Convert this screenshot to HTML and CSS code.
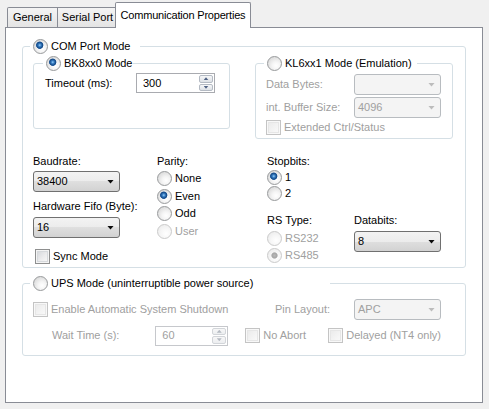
FILE: index.html
```html
<!DOCTYPE html>
<html>
<head>
<meta charset="utf-8">
<title>Communication Properties</title>
<link rel="stylesheet" href="styles.css">
</head>
<body>
<div class="window">
  <div class="tabs">
    <div class="tab tab-general">General</div>
    <div class="tab tab-serial">Serial Port</div>
    <div class="tab tab-active">Communication Properties</div>
  </div>
  <div class="panel">
    <fieldset class="group group-com">
      <legend class="legend legend-com"><span class="rb on">COM Port Mode</span></legend>
      <div class="mode-row">
        <fieldset class="group group-bk">
          <legend class="legend legend-bk"><span class="rb on">BK8xx0 Mode</span></legend>
          <div class="field-row">
            <span class="lbl lbl-timeout">Timeout (ms):</span>
            <div class="spin spin-timeout">
              <span class="spin-val">300</span>
              <span class="spin-btns"><span class="spin-btn up"></span><span class="spin-btn down"></span></span>
            </div>
          </div>
        </fieldset>
        <fieldset class="group group-kl">
          <legend class="legend legend-kl"><span class="rb">KL6xx1 Mode (Emulation)</span></legend>
          <div class="field-row">
            <span class="lbl lbl-kl dis">Data Bytes:</span>
            <div class="sel dis"><span class="sel-val"></span><span class="arrow"></span></div>
          </div>
          <div class="field-row row-gap2">
            <span class="lbl lbl-kl dis">int. Buffer Size:</span>
            <div class="sel dis"><span class="sel-val">4096</span><span class="arrow"></span></div>
          </div>
          <span class="cb dis kl-ext">Extended Ctrl/Status</span>
        </fieldset>
      </div>
      <div class="settings">
        <div class="col col-baud">
          <span class="lbl">Baudrate:</span>
          <div class="sel sel-baud"><span class="sel-val">38400</span><span class="arrow"></span></div>
          <span class="lbl lbl-fifo">Hardware Fifo (Byte):</span>
          <div class="sel sel-fifo"><span class="sel-val">16</span><span class="arrow"></span></div>
          <span class="cb sync">Sync Mode</span>
        </div>
        <div class="col col-parity">
          <span class="lbl">Parity:</span>
          <div class="radio-list parity-list">
            <span class="rb">None</span>
            <span class="rb on">Even</span>
            <span class="rb">Odd</span>
            <span class="rb dis">User</span>
          </div>
        </div>
        <div class="col col-stop">
          <span class="lbl">Stopbits:</span>
          <div class="radio-list stop-list">
            <span class="rb on">1</span>
            <span class="rb">2</span>
          </div>
          <span class="lbl lbl-rstype">RS Type:</span>
          <div class="radio-list rs-list">
            <span class="rb dis">RS232</span>
            <span class="rb dis on">RS485</span>
          </div>
        </div>
        <div class="col col-data">
          <span class="lbl">Databits:</span>
          <div class="sel sel-data"><span class="sel-val">8</span><span class="arrow"></span></div>
        </div>
      </div>
    </fieldset>
    <fieldset class="group group-ups">
      <legend class="legend legend-ups"><span class="rb">UPS Mode (uninterruptible power source)</span></legend>
      <div class="ups-row">
        <span class="cb dis ups-enable">Enable Automatic System Shutdown</span>
        <span class="lbl dis">Pin Layout:</span>
        <div class="sel dis sel-pin"><span class="sel-val">APC</span><span class="arrow"></span></div>
      </div>
      <div class="ups-row ups-row2">
        <span class="lbl dis lbl-wait">Wait Time (s):</span>
        <div class="spin dis spin-wait">
          <span class="spin-val">60</span>
          <span class="spin-btns"><span class="spin-btn up"></span><span class="spin-btn down"></span></span>
        </div>
        <span class="cb dis no-abort">No Abort</span>
        <span class="cb dis">Delayed (NT4 only)</span>
      </div>
    </fieldset>
  </div>
</div>
</body>
</html>
```

FILE: styles.css
```css
* { box-sizing: border-box; }
html, body { margin: 0; padding: 0; }
body {
  width: 489px;
  height: 409px;
  overflow: hidden;
  background: #f0f0f0;
  color: #000;
  font-family: "Liberation Sans", Arial, sans-serif;
  font-size: 11px;
  line-height: 13px;
}
.window { padding: 0 6px 0 5px; }

/* tabs */
.tabs {
  display: flex;
  align-items: flex-end;
  height: 27px;
  padding-left: 2px;
}
.tab {
  height: 20px;
  border: 1px solid #898c95;
  border-bottom: 0;
  background: linear-gradient(#f4f4f4, #e4e4e4);
  display: flex;
  align-items: center;
  justify-content: center;
  white-space: nowrap;
}
.tab-general { width: 51px; border-radius: 2px 0 0 0; }
.tab-serial { width: 61px; margin-left: -1px; border-radius: 0 2px 0 0; }
.tab-active {
  width: 136px;
  height: 26px;
  margin-left: -3px;
  margin-bottom: -1px;
  background: #fff;
  position: relative;
  z-index: 1;
  border-radius: 2px 2px 0 0;
  padding-bottom: 1px;
  letter-spacing: -0.2px;
}

/* panel */
.panel {
  width: 478px;
  height: 376px;
  border: 1px solid #898c95;
  background: #fff;
}

/* group boxes */
.group {
  margin: 0;
  min-width: 0;
  border: 1px solid #d5dfe5;
  border-radius: 3px;
}
.legend {
  display: block;
  height: 13px;
  line-height: 13px;
  margin-left: -3px;
  padding: 0 0 0 3px;
}
.legend-com { padding-right: 10px; }
.legend-bk { margin-left: -2px; padding-right: 1px; }
.legend-kl { margin-left: -2px; padding-right: 5px; }
.legend-ups { width: 300px; }

.group-com {
  margin: 12px 16px 0 16px;
  padding: 4px 12px 4px 10px;
}
.mode-row {
  display: flex;
  align-items: flex-start;
  height: 82px;
}
.group-bk {
  width: 197px;
  height: 72px;
  padding: 3px 0 0 11px;
}
.group-kl {
  width: 198px;
  height: 82px;
  margin-left: 25px;
  padding: 4px 0 0 10px;
}
.field-row {
  display: flex;
  align-items: center;
}
.row-gap2 { margin-top: 2px; }
.lbl { display: block; height: 13px; line-height: 13px; white-space: nowrap; }
.lbl-timeout { width: 91px; }
.lbl-kl { width: 88px; }
.kl-ext { margin-top: 3px; }

.dis { color: #a0a0a0; }

/* settings */
.settings {
  display: flex;
  margin-top: 16px;
  height: 108px;
}
.col { display: flex; flex-direction: column; align-items: flex-start; }
.col-baud { width: 124px; }
.col-parity { width: 110px; }
.col-stop { width: 87px; }
.sel-baud { margin-top: 3px; }
.lbl-fifo { margin-top: 8px; }
.sel-fifo { margin-top: 4px; }
.sync { margin-top: 12px; margin-left: 2px; }

.radio-list { display: flex; flex-direction: column; align-items: flex-start; }
.parity-list { margin-top: 4px; gap: 4.5px; }
.stop-list { margin-top: 3px; gap: 3px; }
.lbl-rstype { margin-top: 14px; }
.rs-list { margin-top: 4.5px; gap: 4px; }
.col-data { padding-top: 59px; }
.sel-data { margin-top: 4px; }

/* UPS group */
.group-ups {
  margin: 9px 16px 0 16px;
  padding: 9px 24px 9px 10px;
}
.ups-row {
  display: flex;
  align-items: center;
  height: 21px;
}
.ups-enable { flex: 1; }
.sel-pin { margin-left: 24px; }
.ups-row2 { margin-top: 5px; }
.lbl-wait { width: 112px; margin-left: 19px; }
.spin-wait { width: 58px; height: 21px; }
.no-abort { width: 90px; margin-left: 17px; }

/* radio buttons */
.rb, .cb {
  display: inline-flex;
  align-items: center;
  gap: 3px;
  height: 13px;
  line-height: 13px;
  white-space: nowrap;
  vertical-align: top;
}
.rb::before {
  content: "";
  flex: none;
  width: 13px;
  height: 13px;
  border-radius: 50%;
  border: 1px solid #989a9c;
  background: radial-gradient(circle at 62% 66%, #ffffff 0, #f5f5f5 32%, #dddddd 74%, #c9c9c9 100%);
}
.rb.on::before {
  background:
    radial-gradient(circle at 44% 40%, #9ad0f7 0, #3a80c6 1.4px, #154a86 3px, #2c62a0 3.4px, rgba(255,255,255,0) 4px),
    radial-gradient(circle at 62% 66%, #ffffff 0, #f5f5f5 32%, #dddddd 74%, #c9c9c9 100%);
}
.rb.dis::before {
  border-color: #cacaca;
  background: radial-gradient(circle at 62% 66%, #ffffff 0, #f7f7f7 40%, #e8e8e8 100%);
}
.rb.dis.on::before {
  background:
    radial-gradient(circle at 50% 50%, #b8b8b8 0, #a6a6a6 2.6px, rgba(255,255,255,0) 3.6px),
    radial-gradient(circle at 62% 66%, #ffffff 0, #f7f7f7 40%, #e8e8e8 100%);
}

/* check boxes */
.cb::before {
  content: "";
  flex: none;
  width: 13px;
  height: 13px;
  border: 1px solid #8e8f8f;
  background: linear-gradient(135deg, #d0d3d7 0%, #ececed 55%, #fafafa 100%);
  box-shadow: inset 0 0 0 1px #f4f4f4, inset 0 0 0 2px #d6d9dc;
}
.cb.dis::before {
  border-color: #c4c4c4;
  background: linear-gradient(135deg, #e8e8e8 0%, #f4f4f4 60%, #fbfbfb 100%);
  box-shadow: inset 0 0 0 1px #f8f8f8, inset 0 0 0 2px #e6e6e6;
}

/* combo boxes */
.sel {
  display: flex;
  align-items: center;
  width: 87px;
  height: 21px;
  padding-left: 3px;
  border: 1px solid #707070;
  border-radius: 3px;
  background: linear-gradient(#f3f3f3 0%, #ececec 50%, #dfdfdf 50%, #d2d2d2 100%);
  color: #000;
}
.sel-val { flex: 1; white-space: nowrap; }
.arrow {
  flex: none;
  width: 7px;
  height: 4px;
  margin-right: 5px;
  background: #0d0d0d;
  clip-path: polygon(0 0, 100% 0, 50% 100%);
}
.sel.dis {
  border-color: #b8bcc0;
  background: #f4f4f4;
  color: #a0a0a0;
}
.sel.dis .arrow { background: #bcbcbc; }

/* spinners */
.spin {
  display: flex;
  align-items: stretch;
  width: 79px;
  height: 20px;
  border: 1px solid #a9abb0;
  background: #fff;
}
.spin-val {
  flex: 1;
  display: flex;
  align-items: center;
  padding-left: 6px;
}
.spin-btns {
  flex: none;
  width: 15px;
  display: flex;
  flex-direction: column;
  padding: 1px 1px 1px 0;
  gap: 1px;
}
.spin-btn {
  flex: 1;
  display: flex;
  align-items: center;
  justify-content: center;
  border: 1px solid #b4bac3;
  border-radius: 2px;
  background: linear-gradient(#f6f7f8, #dde1e6);
}
.spin-btn::before {
  content: "";
  width: 5px;
  height: 3px;
  background: #4f6283;
}
.spin-btn.up::before { clip-path: polygon(50% 0, 100% 100%, 0 100%); }
.spin-btn.down::before { clip-path: polygon(0 0, 100% 0, 50% 100%); }
.spin.dis { border-color: #c6c8cc; color: #a0a0a0; }
.spin.dis .spin-btn { border-color: #d2d5d9; background: linear-gradient(#f7f7f7, #eceef0); }
.spin.dis .spin-btn::before { background: #b5bac2; }
```
